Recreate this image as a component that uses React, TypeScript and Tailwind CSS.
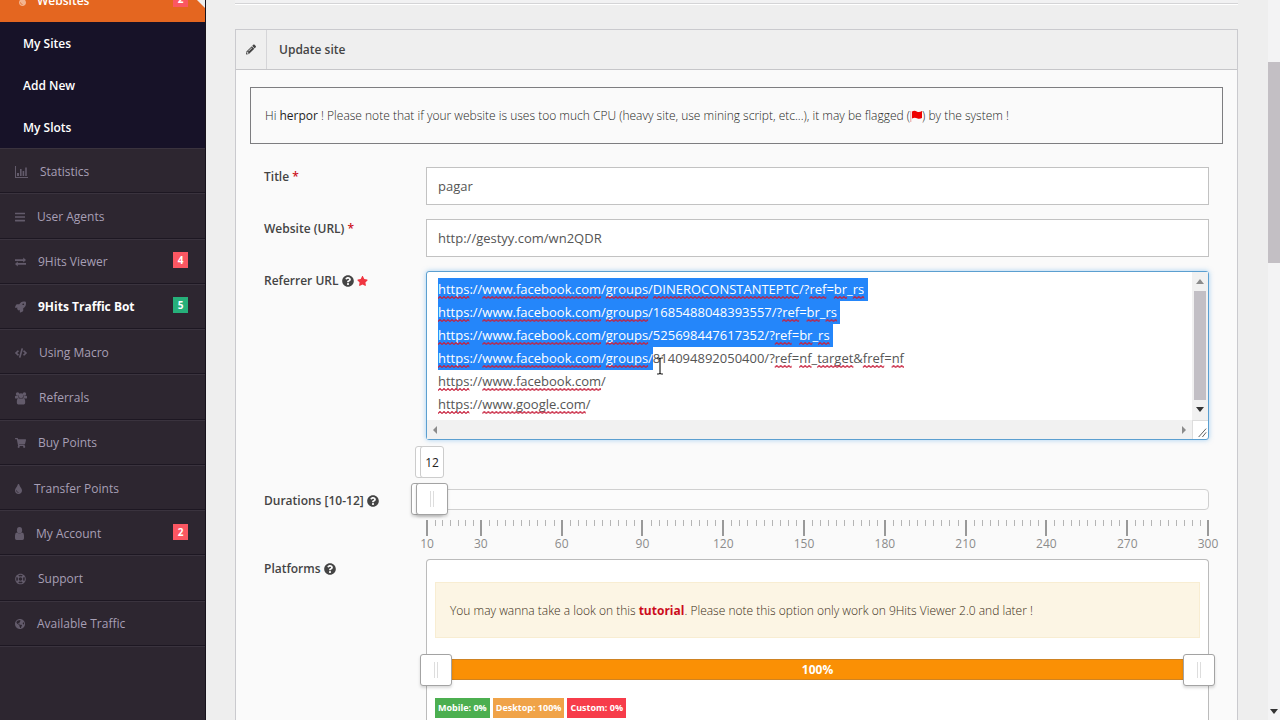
import { useEffect, useRef, useState } from 'react';
import type { ReactNode } from 'react';
import {
  FaBars,
  FaCode,
  FaGlobeAmericas,
  FaPencilAlt,
  FaQuestionCircle,
  FaRegLifeRing,
  FaRocket,
  FaShoppingCart,
  FaStar,
  FaTint,
} from 'react-icons/fa';

const subItems = ['My Sites', 'Add New', 'My Slots'];

const ChartIcon = () => (
  <svg viewBox="0 0 13 12" className="w-[13px] h-3" fill="currentColor">
    <path d="M0 0h1v11h12v1H0zM2 7h2v3H2zM5 3h1.600v7H5zM7.600 5h1.600v5H7.600zM10.200 1.500h1.600V10h-1.600z" />
  </svg>
);

const ExchangeIcon = () => (
  <svg viewBox="0 0 12 10" className="w-[11px] h-[10px]" fill="currentColor">
    <path d="M0 2h9V0l3 2.900L9 5.500V4H0zM12 6H3V4.500L0 7.200 3 10V8h9z" />
  </svg>
);

const UsersIcon = () => (
  <svg viewBox="0 0 13 14" className="w-3 h-[14px]" fill="currentColor">
    <circle cx="2.800" cy="2.600" r="1.900" />
    <circle cx="10.200" cy="2.600" r="1.900" />
    <circle cx="6.500" cy="4.600" r="2.700" />
    <path d="M0 7.200V5.500Q0 4.500 1 4.500h2.600q-.3 1.800 1 3H.6zM13 7.200V5.500q0-1-1-1H9.400q.3 1.800-1 3h4zM2 12.500V10q0-2.400 2.200-2.400h4.600Q11 7.600 11 10v2.500q0 1.500-1.500 1.500h-6Q2 14 2 12.500z" />
  </svg>
);

const PersonIcon = () => (
  <svg viewBox="0 0 9 13" className="w-[9px] h-[13px]" fill="currentColor">
    <ellipse cx="4.500" cy="3.200" rx="2.600" ry="3.200" />
    <path d="M0 11.300V8.500Q0 5.800 2 5.600q2.500 2 5 0 2 .2 2 2.900v2.800Q9 13 7.500 13h-6Q0 13 0 11.300z" />
  </svg>
);

const FlagIcon = () => (
  <svg viewBox="0 0 12 12" className="inline w-3 h-3 align-[-2px]">
    <path d="M.800 1v11" stroke="#e7a0a0" strokeWidth="1" />
    <path d="M2 1.600q2.300-1.400 4.700-.2t5.300-.4v7q-2.600 1.500-5 .3T2 8.600z" fill="#ee0000" />
  </svg>
);

type MenuItem = { label: string; icon: ReactNode; badge?: string; badgeClass?: string; active?: boolean };

const menu: MenuItem[] = [
  { label: 'Statistics', icon: <ChartIcon /> },
  { label: 'User Agents', icon: <FaBars className="w-[10px] h-3" /> },
  { label: '9Hits Viewer', icon: <ExchangeIcon />, badge: '4', badgeClass: 'bg-[#fb5762]' },
  { label: '9Hits Traffic Bot', icon: <FaRocket className="w-[11px] h-3" />, badge: '5', badgeClass: 'bg-[#26b07a]', active: true },
  { label: 'Using Macro', icon: <FaCode className="w-3 h-3" /> },
  { label: 'Referrals', icon: <UsersIcon /> },
  { label: 'Buy Points', icon: <FaShoppingCart className="w-[11px] h-3" /> },
  { label: 'Transfer Points', icon: <FaTint className="w-[7px] h-3" /> },
  { label: 'My Account', icon: <PersonIcon />, badge: '2', badgeClass: 'bg-[#fb5762]' },
  { label: 'Support', icon: <FaRegLifeRing className="w-[11px] h-3" /> },
  { label: 'Available Traffic', icon: <FaGlobeAmericas className="w-[10px] h-3" /> },
];

const referrers = [
  'https://www.facebook.com/groups/DINEROCONSTANTEPTC/?ref=br_rs',
  'https://www.facebook.com/groups/1685488048393557/?ref=br_rs',
  'https://www.facebook.com/groups/525698447617352/?ref=br_rs',
  'https://www.facebook.com/groups/814094892050400/?ref=nf_target&fref=nf',
  'https://www.facebook.com/',
  'https://www.google.com/',
];

const majors = [10, 30, 60, 90, 120, 150, 180, 210, 240, 270, 300];
const toPercent = (v: number) => ((v - 10) / 290) * 100;
const minors = majors.slice(1).flatMap((end, i) => {
  const start = majors[i];
  const parts = i === 0 ? 7 : 10;
  return Array.from({ length: parts - 1 }, (_, k) => start + ((end - start) * (k + 1)) / parts);
});

const rangeClass =
  'absolute inset-x-0 top-0 h-8 w-full appearance-none bg-transparent pointer-events-none outline-none ' +
  '[&::-webkit-slider-thumb]:pointer-events-auto [&::-webkit-slider-thumb]:appearance-none [&::-webkit-slider-thumb]:w-8 [&::-webkit-slider-thumb]:h-8 ' +
  '[&::-webkit-slider-thumb]:rounded-[3px] [&::-webkit-slider-thumb]:border [&::-webkit-slider-thumb]:border-[#a3a3a3] ' +
  '[&::-webkit-slider-thumb]:shadow-[0_2px_3px_rgba(0,0,0,0.15)] ' +
  '[&::-webkit-slider-thumb]:bg-[linear-gradient(90deg,#ddd_1px,#fff_1px,#fff_3px,#ddd_3px)] [&::-webkit-slider-thumb]:bg-size-[4px_16px] ' +
  '[&::-webkit-slider-thumb]:bg-no-repeat [&::-webkit-slider-thumb]:bg-center [&::-webkit-slider-thumb]:bg-white';

function Sidebar() {
  return (
    <nav className="w-[206px] shrink-0 bg-[#2d2630] border-r border-[#17121c] text-xs">
      <a href="#websites" className="relative -mt-[22px] flex h-11 items-center bg-[#e46620] pl-[19px] pr-[17px] pt-[2px] text-white">
        <FaTint className="w-[7px] h-3 text-[#f3b48f]" />
        <span className="ml-[11px] font-semibold">Websites</span>
        <span className="ml-auto bg-[#fb5762] w-[15px] h-4 mb-1 text-center text-[10px] leading-4 font-bold">2</span>
        <svg viewBox="0 0 8 8" className="absolute right-0 top-[22px] w-2 h-2">
          <path d="M0 0h8v8z" fill="#eee" />
        </svg>
      </a>
      <div className="bg-[#171228]">
        {subItems.map((s) => (
          <a key={s} href="#sites" className="flex h-[42px] items-center pt-[2px] pl-[23px] font-semibold text-white">
            {s}
          </a>
        ))}
      </div>
      <div className="grid h-[498px] auto-rows-fr">
        {menu.map((m) => (
          <a
            key={m.label}
            href="#menu"
            className="flex items-center gap-3 border-t border-t-[#3a333e] border-b border-b-[#1d1722] pt-[2px] pl-[15px] pr-[17px] text-[#a79fb5]"
          >
            <span className="text-[#635b6b]">{m.icon}</span>
            <span className={m.active ? 'font-bold text-white' : ''}>{m.label}</span>
            {m.badge && (
              <span className={`ml-auto mb-1 w-[15px] h-4 text-center text-[10px] leading-4 font-bold text-white ${m.badgeClass}`}>
                {m.badge}
              </span>
            )}
          </a>
        ))}
      </div>
      <div className="border-t border-[#3a333e]" />
    </nav>
  );
}

function Row({ label, htmlFor, mark, className, children }: { label: string; htmlFor: string; mark?: ReactNode; className: string; children: ReactNode }) {
  return (
    <div className="flex items-start">
      <label htmlFor={htmlFor} className={`flex w-[162px] shrink-0 items-center gap-[3px] text-xs font-semibold text-[#444] ${className}`}>
        {label}
        {mark}
      </label>
      <div className="min-w-0 flex-1">{children}</div>
    </div>
  );
}

type Mark = { x: number; w: number; line: number };

function ReferrerBox() {
  const ref = useRef<HTMLTextAreaElement>(null);
  const [marks, setMarks] = useState<Mark[]>([]);

  useEffect(() => {
    const el = ref.current;
    if (!el) return;
    const end = referrers.slice(0, 3).join('\n').length + 1 + 'https://www.facebook.com/groups/'.length;
    el.focus({ preventScroll: true });
    el.setSelectionRange(0, end);

    // spell check marks follow the width of each word
    const ctx = document.createElement('canvas').getContext('2d');
    if (!ctx) return;
    const style = getComputedStyle(el);
    ctx.font = `${style.fontSize} ${style.fontFamily}`;
    setMarks(
      referrers.flatMap((text, line) =>
        [...text.matchAll(/[A-Za-z]+(?:\.[A-Za-z]+)*/g)].map((m) => ({
          x: ctx.measureText(text.slice(0, m.index)).width,
          w: ctx.measureText(m[0]).width,
          line,
        })),
      ),
    );
  }, []);

  return (
    <div className="relative rounded-[3px] border border-[#5b9fd0] bg-white shadow-[0_0_5px_rgba(82,168,236,0.5)]">
      <div className="flex">
        <textarea
          id="referrer"
          ref={ref}
          wrap="off"
          spellCheck={false}
          defaultValue={referrers.join('\n')}
          className="block h-[148px] min-w-0 flex-1 resize-none overflow-hidden bg-transparent pl-[11px] pt-[6px] text-[13px] leading-[23px] text-[#555] outline-none selection:bg-[#2486fa] selection:text-white"
        />
        <div className="flex w-4 flex-col items-center bg-[#f1f1f1] pt-[7px] pb-2">
          <svg viewBox="0 0 8 5" className="w-2 h-[5px]"><path d="M4 0l4 5H0z" fill="#8b8b8b" /></svg>
          <div className="my-[7px] w-3 flex-1 bg-[#c2bfc5]" />
          <svg viewBox="0 0 8 5" className="w-2 h-[5px]"><path d="M0 0h8L4 5z" fill="#333" /></svg>
        </div>
      </div>
      <div className="flex h-[19px]">
        <div className="flex flex-1 items-center justify-between bg-[#f1f1f1] px-[6px]">
          <svg viewBox="0 0 4 8" className="w-1 h-2"><path d="M4 0v8L0 4z" fill="#8b8b8b" /></svg>
          <svg viewBox="0 0 4 8" className="w-1 h-2"><path d="M0 0v8l4-4z" fill="#8b8b8b" /></svg>
        </div>
        <svg viewBox="0 0 16 19" className="w-4 h-[19px] border-l border-t border-[#ddd]">
          <path d="M6 17l8-9M10 17l4-5" stroke="#555" strokeWidth="1" fill="none" />
        </svg>
      </div>
      <svg className="pointer-events-none absolute left-[11px] top-[6px] h-[140px] w-[600px]">
        <defs>
          <pattern id="wave" width="4" height="3" patternUnits="userSpaceOnUse">
            <path d="M0 2.500L2 .5 4 2.500" stroke="#c8203c" strokeWidth="1.100" fill="none" />
          </pattern>
        </defs>
        {marks.map((m, i) => (
          <g key={i} style={{ transform: `translate(${m.x}px, ${m.line * 23 + 18}px)` }}>
            <rect width={m.w} height="3" fill="url(#wave)" />
          </g>
        ))}
      </svg>
      <svg viewBox="0 0 8 18" className="pointer-events-none absolute left-[229px] top-[85px] h-[18px] w-2">
        <path d="M1 1h2l1 1 1-1h2M4 2v14M1 17h2l1-1 1 1h2" stroke="#222" strokeWidth="1.200" fill="none" />
      </svg>
    </div>
  );
}

function DurationSlider() {
  return (
    <div className="relative pt-[6px]">
      <div className="h-[21px] rounded-[4px] border border-[#d0d0d0] bg-[#fcfcfc]" />
      <div className="absolute -inset-x-[15px] top-0 h-8">
        <input type="range" aria-label="Minimum duration" min={10} max={300} defaultValue={10} className={rangeClass} />
        <input id="duration" type="range" min={10} max={300} defaultValue={12} className={rangeClass} />
      </div>
      <div className="absolute -top-[37px] left-[-11px] h-8 w-6 rounded-[3px] border border-[#ccc] bg-white" />
      <output htmlFor="duration" className="absolute -top-[37px] left-[-6px] h-8 w-6 rounded-[3px] border border-[#ccc] bg-white text-center text-xs leading-8 text-[#222]">
        12
      </output>
      <div className="relative mx-px mt-[10px] h-[34px] text-xs text-[#8c8c8c]">
        {minors.map((v) => (
          <i key={v} className="absolute top-0 h-[6px] w-px bg-[#b5b5b5]" style={{ left: `${toPercent(v)}%` }} />
        ))}
        {majors.map((v) => (
          <div key={v} className="absolute top-0 flex w-10 -translate-x-1/2 flex-col items-center" style={{ left: `${toPercent(v)}%` }}>
            <i className="h-4 w-[2px] bg-[#999]" />
            <span className="leading-4">{v}</span>
          </div>
        ))}
      </div>
    </div>
  );
}

function PlatformsBox() {
  return (
    <div className="rounded-t-[4px] border border-b-0 border-[#bbb] bg-white px-2 pt-[22px] pb-10">
      <div className="flex h-[56px] items-center border border-[#f8edd2] bg-[#fcf5e4] pl-[14px] pt-px text-xs font-light text-[#3a2c14]">
        <p>
          You may wanna take a look on this <a href="#tutorial" className="font-bold text-[#cc0c1c]">tutorial</a>. Please note this option only work on 9Hits Viewer 2.0 and later !
        </p>
      </div>
      <div className="relative mt-4 h-8">
        <div className="absolute inset-x-0 top-[5px] flex h-[21px] items-center justify-center border-y border-[#cf8322] bg-[#fa9005] text-xs font-bold text-white">
          100%
        </div>
        <div className="absolute -inset-x-[15px] top-0 h-8">
          <input id="platforms" type="range" defaultValue={0} className={rangeClass} />
          <input type="range" aria-label="Platforms upper share" defaultValue={100} className={rangeClass} />
        </div>
      </div>
      <div className="mt-3 flex gap-[3px] text-[9px] leading-5 font-bold text-white">
        <span className="bg-[#4caf50] px-[3px]">Mobile: 0%</span>
        <span className="bg-[#f0a348] px-[3px]">Desktop: 100%</span>
        <span className="bg-[#f73c4a] px-[3px]">Custom: 0%</span>
      </div>
    </div>
  );
}

export default function App() {
  const star = <span className="text-[#cc1122]">*</span>;
  const help = <FaQuestionCircle className="w-3 h-3 text-[#444]" />;
  const inputClass = 'block h-[38px] w-full border border-[#c2c2c2] bg-white px-[11px] text-[13px] text-[#555] outline-none';

  return (
    <div className="flex h-screen overflow-hidden bg-[#eeeeee] font-['Open_Sans','Noto_Sans',sans-serif]">
      <Sidebar />
      <main className="min-w-0 flex-1 pl-[29px] pr-[30px]">
        <div className="h-1 border-b border-[#d4d4d6] bg-[#f1f1f2] shadow-[0_1px_0_#fff]" />
        <section className="mt-[25px] border border-[#cacace] bg-[#fafafa]">
          <header className="flex h-10 items-center border-b border-[#c6c6c9] bg-[#efefef] text-[#444]">
            <span className="flex h-full w-[31px] items-center justify-center border-r border-[#d5d5d8]">
              <FaPencilAlt className="w-[10px] h-[11px]" />
            </span>
            <h2 className="pl-3 text-xs font-semibold">Update site</h2>
          </header>
          <div className="px-[14px] pt-[17px]">
            <div className="flex h-[57px] items-center border border-[#7d7d80] pl-[14px] text-xs font-light text-[#1f1f24]">
              <p>
                Hi <b>herpor</b> ! Please note that if your website is uses too much CPU (heavy site, use mining script, etc...), it may be flagged (<FlagIcon />) by the system !
              </p>
            </div>
          </div>
          <form className="flex flex-col gap-[14px] pt-[23px] pl-7 pr-[28px]">
            <Row label="Title" htmlFor="title" mark={star} className="pt-[2px]">
              <input id="title" type="text" defaultValue="pagar" className={inputClass} />
            </Row>
            <Row label="Website (URL)" htmlFor="website" mark={star} className="pt-[2px]">
              <input id="website" type="text" defaultValue="http://gestyy.com/wn2QDR" className={inputClass} />
            </Row>
            <Row label="Referrer URL" htmlFor="referrer" mark={<>{help}<FaStar className="w-[11px] h-3 text-[#f03540]" /></>} className="pt-[2px]">
              <ReferrerBox />
            </Row>
            <div className="pt-[29px]">
              <Row label="Durations [10-12]" htmlFor="duration" mark={help} className="pt-[10px]">
                <DurationSlider />
              </Row>
            </div>
            <div className="-mt-[9px]">
              <Row label="Platforms" htmlFor="platforms" mark={help} className="pt-[2px]">
                <PlatformsBox />
              </Row>
            </div>
          </form>
        </section>
      </main>
      <div className="flex w-3 shrink-0 flex-col items-center bg-[#f3f3f4]">
        <div className="mt-[62px] h-[201px] w-full bg-[#c3bfc4]" />
        <svg viewBox="0 0 8 5" className="mt-auto mb-[6px] h-[5px] w-2"><path d="M0 0h8L4 5z" fill="#333" /></svg>
      </div>
    </div>
  );
}
